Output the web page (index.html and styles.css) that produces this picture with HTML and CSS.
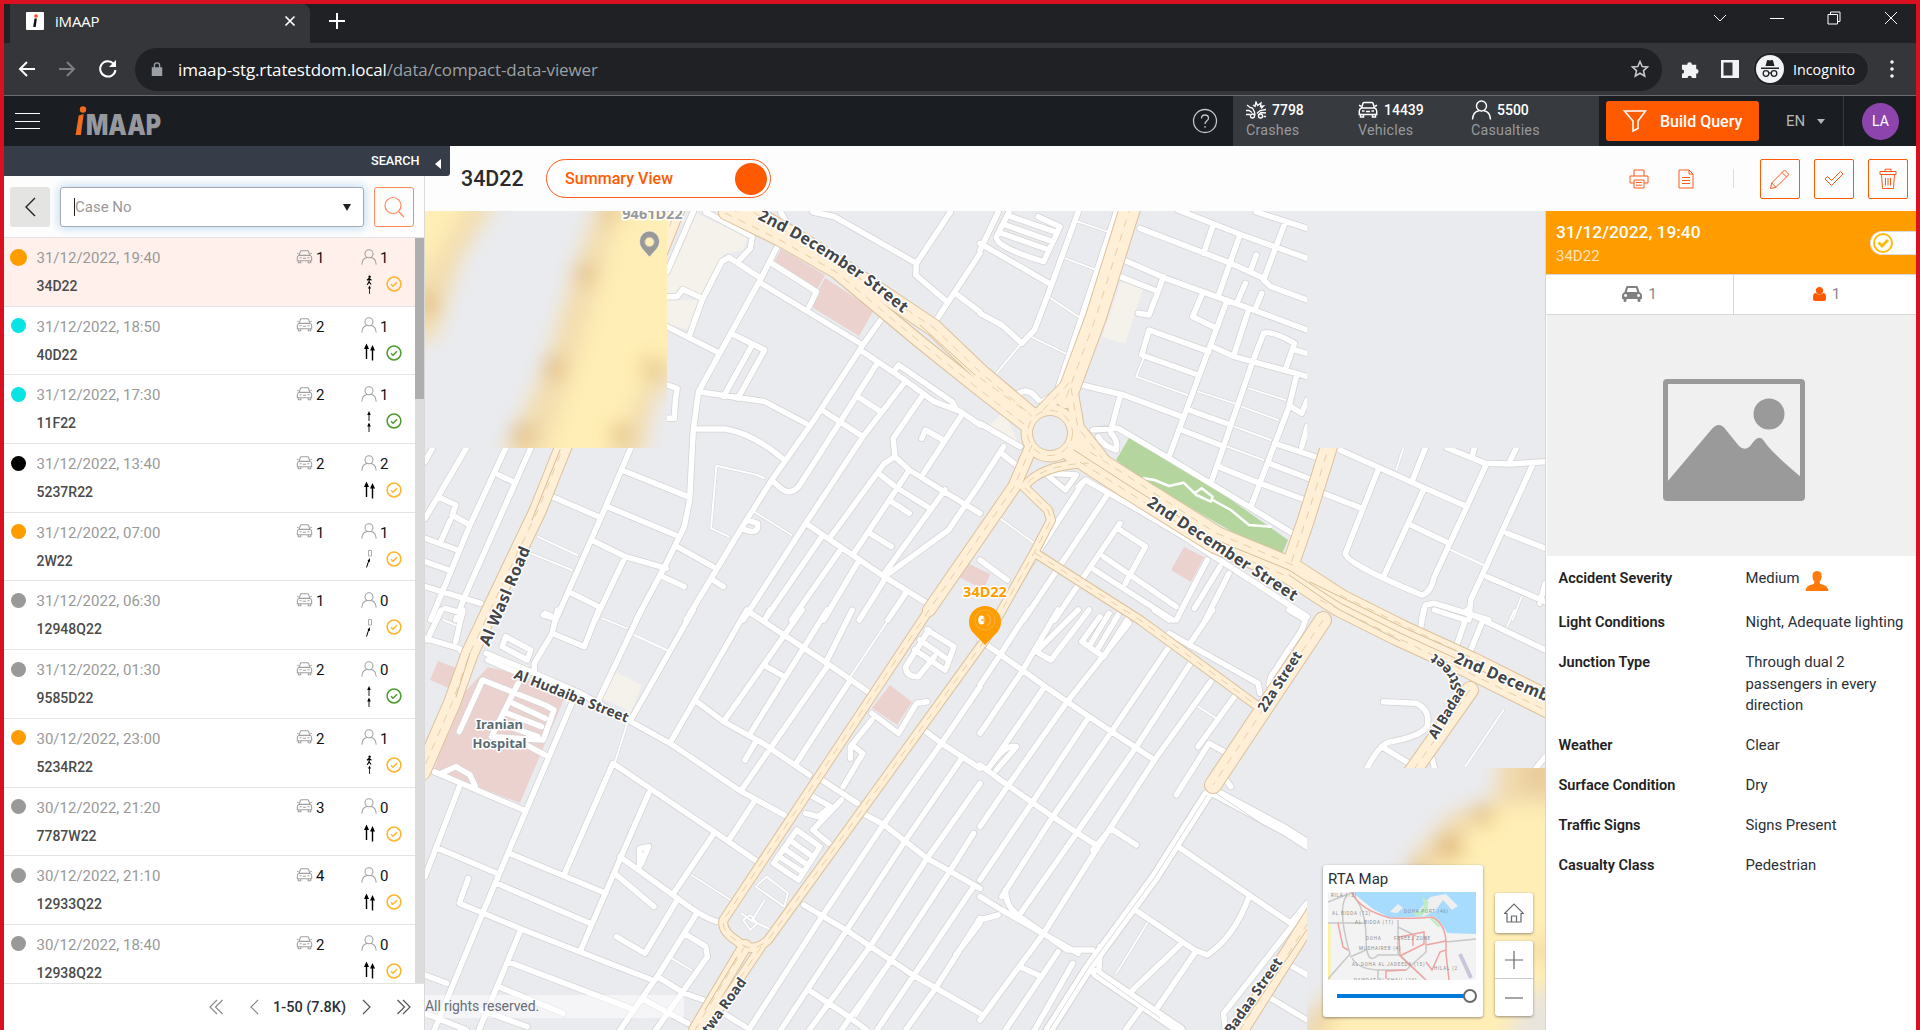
FILE: index.html
```html
<!DOCTYPE html>
<html lang="en">
<head>
<meta charset="utf-8">
<title>iMAAP</title>
<link rel="stylesheet" href="styles.css">
</head>
<body>
<svg class="sprite" width="0" height="0" aria-hidden="true">
  <symbol id="car" viewBox="0 0 20 17"><path d="M3.500 6.500 5 1.800Q5.300 1 6.200 1h7.600q.9 0 1.200.8l1.500 4.700M1 3.800l2 .9M19 3.800l-2 .9M3.300 6.500h13.400q2 .8 2 3V13H1.300V9.500q0-2.200 2-3zM2.500 13v2.500h3V13M14.500 13v2.500h3V13M4 9.500h2.500M13.500 9.500H16M8 10h4"/></symbol>
  <symbol id="person" viewBox="0 0 20 20"><circle cx="10" cy="6" r="5"/><path d="M1 19.500q.5-8 6.500-8.800M19 19.500q-.5-8-6.500-8.800"/></symbol>
  <symbol id="check" viewBox="0 0 16 16"><circle cx="8" cy="8" r="6.900" stroke-width="1.500"/><path d="m5 8.200 2 2 4-3.900" stroke-width="1.500"/></symbol>
  <symbol id="up2" viewBox="0 0 16 22"><path d="M5.500 4v13M11.500 6v12.500" stroke-width="1.400"/><path d="M5.500 1.500 3 7h5zM11.500 3 9 8.500h5z" fill="#000" stroke="none"/></symbol>
  <symbol id="line2" viewBox="0 0 16 22"><path d="M8 2v8M8 13v8" stroke-width=".9"/><path d="M8 0 6.200 4h3.600zM8 11.500 6.200 15.500h3.600z" fill="#000" stroke="none"/></symbol>
  <symbol id="walk" viewBox="0 0 16 22"><path d="m8.300 5-.3 3-1.800 2.800m2.100-2.800 1.700 2.500M8 4.500 6 6.200M8 4.500l2.500 1.700" stroke-width="1.200"/><circle cx="8.600" cy="2.800" r="1.200" fill="#000" stroke="none"/><path d="M8.500 14v6" stroke-width=".8"/><path d="m8.500 11.500-1.500 3h3z" fill="#000" stroke="none"/></symbol>
  <symbol id="object" viewBox="0 0 16 22"><path d="M7.500 2.500h3v5.500h-3z" stroke="#999" stroke-width=".8"/><path d="m8 12-2.500 7.500" stroke-width="1"/><path d="m8.800 10-2.300 3 2.500 1z" fill="#000" stroke="none"/></symbol>
</svg>

<div class="window">
  <div class="tabs">
    <div class="tab">
      <svg class="favicon" width="18" height="18" viewBox="0 0 18 18"><rect width="18" height="18" rx="1" fill="#fff"/><circle cx="10" cy="4" r="1.800" fill="#f04e23"/><path d="M8.500 6.500h2.400L9.700 15H7.200z" fill="#111"/></svg>
      <span class="tab-title">iMAAP</span>
      <svg width="12" height="12" viewBox="0 0 12 12" stroke="#fff" stroke-width="1.700"><path d="m1.500 1.500 9 9m0-9-9 9"/></svg>
    </div>
    <svg class="newtab" width="16" height="16" viewBox="0 0 16 16" stroke="#fff" stroke-width="2"><path d="M8 0v16M0 8h16"/></svg>
    <div class="winctl">
      <svg width="14" height="14" viewBox="0 0 14 14"><path d="m1 4 6 6 6-6"/></svg>
      <svg width="14" height="14" viewBox="0 0 14 14"><path d="M0 7.500h14"/></svg>
      <svg width="14" height="14" viewBox="0 0 14 14"><path d="M1 3.500h9.500V13H1zM3.500 3.500V1H13v9.500h-2.500"/></svg>
      <svg width="14" height="14" viewBox="0 0 14 14"><path d="m1 1 12 12M13 1 1 13"/></svg>
    </div>
  </div>
  <div class="toolbar">
    <div class="nav">
      <svg width="18" height="18" viewBox="0 0 18 18" stroke="#fff"><path d="M17 9H2m7-7L2 9l7 7"/></svg>
      <svg width="18" height="18" viewBox="0 0 18 18" stroke="#7d7e81"><path d="M1 9h15M9 2l7 7-7 7"/></svg>
      <svg width="20" height="20" viewBox="0 0 20 20" stroke="#fff"><path d="M17.500 11A7.700 7.700 0 1 1 15.500 4.600"/><path d="M18 1v7h-7z" fill="#fff" stroke="none"/></svg>
    </div>
    <div class="omnibox">
      <svg width="12" height="14" viewBox="0 0 12 16"><path d="M0 6h12v10H0z" fill="#9aa0a6"/><path d="M3 7V4a3 3 0 0 1 6 0v3" fill="none" stroke="#9aa0a6" stroke-width="1.500"/></svg>
      <span class="url"><b>imaap-stg.rtatestdom.local</b><span>/data/compact-data-viewer</span></span>
      <svg class="star" width="18" height="18" viewBox="0 0 18 18" fill="none" stroke="#c6c7ca" stroke-width="1.600"><path d="m9 1.500 2.200 5 5.300.5-4 3.600 1.200 5.400L9 13.200 4.300 16l1.200-5.400-4-3.600 5.300-.5z"/></svg>
    </div>
    <svg class="puzzle" width="19" height="19" viewBox="0 0 20 20" fill="#f1f3f4"><path d="M1 5h5.500a2.500 2.500 0 1 1 5 0H16v4.500a2.500 2.500 0 1 1 0 5V19h-4.500a2.300 2.300 0 1 0-4.600 0H1v-4.500a2.300 2.300 0 1 0 0-4.600z"/></svg>
    <svg class="side" width="18" height="18" viewBox="0 0 18 18"><path d="M0 0h18v18H0zM2.500 2.500v13h9v-13z" fill="#f1f3f4" fill-rule="evenodd"/></svg>
    <div class="incog">
      <svg width="28" height="28" viewBox="0 0 28 28"><circle cx="14" cy="14" r="14" fill="#f1f3f4"/><path d="m9.500 11 1.500-5.500q.3-.8 1.200-.5l1.800.5 1.800-.5q.9-.3 1.200.5L18.500 11zM5 12.500h18V14H5z" fill="#202124"/><g fill="none" stroke="#202124" stroke-width="1.300"><circle cx="10" cy="18.500" r="2.800"/><circle cx="18" cy="18.500" r="2.800"/><path d="M12.800 18.300q1.200-.8 2.400 0"/></g></svg>
      <span>Incognito</span>
    </div>
    <svg class="dots" width="4" height="18" viewBox="0 0 4 18" fill="#f1f3f4"><circle cx="2" cy="2" r="1.800"/><circle cx="2" cy="9" r="1.800"/><circle cx="2" cy="16" r="1.800"/></svg>
  </div>

  <header class="appbar">
    <div class="burger"><i></i><i></i><i></i></div>
    <svg class="logo" width="88" height="32" viewBox="0 0 88 32"><circle cx="9" cy="4.500" r="3.200" fill="#f26a1b"/><path d="m4.700 10.500 5-1.500-2.800 21H1.600z" fill="#f26a1b"/><text x="12" y="30" textLength="75" lengthAdjust="spacingAndGlyphs">MAAP</text></svg>
    <svg class="help" width="26" height="26" viewBox="0 0 26 26" fill="none" stroke="#c3c4c6" stroke-width="1.300"><circle cx="13" cy="13" r="11.500"/><path d="M9.500 10.500q0-3.500 3.500-3.500t3.500 3.200c0 2.500-3.500 2.600-3.500 5.800M13 18v1.800"/></svg>
    <div class="stats">
      <div class="stat"><svg width="21" height="18" viewBox="0 0 21 18" fill="none" stroke="#fff" stroke-width="1.300"><path d="m1 4 3 2.500 2.500.5 2 4 .5 3.500M20 12l-5-.5-3 3M0 9.500h3l3 2M0 13.500h4M20 8.500l-6 1-3 3M20 15.500h-2.500M7 4l2 1.500L10 1l1.500 3.500L15 2l-.5 3.500 3-.5-2.500 2.500"/><circle cx="6.500" cy="15" r="2"/><circle cx="14.500" cy="15" r="2"/></svg><b>7798</b><span>Crashes</span></div>
      <div class="stat"><svg class="ic" width="20" height="18" stroke="#fff" stroke-width="1.500"><use href="#car"/></svg><b>14439</b><span>Vehicles</span></div>
      <div class="stat"><svg class="ic" width="21" height="20" stroke="#fff" stroke-width="1.400"><use href="#person"/></svg><b>5500</b><span>Casualties</span></div>
    </div>
    <button class="build"><svg width="24" height="24" viewBox="0 0 24 24" fill="none" stroke="#fff" stroke-width="1.600"><path d="M1.500 2h21L15 12v7.500L10 22V12z"/></svg>Build Query</button>
    <div class="lang">EN<i></i></div>
    <div class="user"><span>LA</span></div>
  </header>

  <div class="body">
    <aside class="left">
      <div class="searchbar"><span>SEARCH</span><i></i></div>
      <div class="filter">
        <div class="back"><svg width="12" height="20" viewBox="0 0 12 20" fill="none" stroke="#222" stroke-width="1.400"><path d="M11 1 2 10l9 9"/></svg></div>
        <div class="input"><em></em><span>Case No</span><i></i></div>
        <div class="find"><svg width="22" height="22" viewBox="0 0 22 22" fill="none" stroke="#ff8a57" stroke-width="1.200"><circle cx="10" cy="9.500" r="8"/><path d="m15.500 15.500 5.500 5.500"/></svg></div>
      </div>
      <div class="listwrap">
        <div class="list">
          <div class="row sel"><i class="dot orange"></i><span class="date">31/12/2022, 19:40</span><span class="cars"><svg><use href="#car"/></svg>1</span><span class="ppl"><svg><use href="#person"/></svg>1</span><span class="case">34D22</span><svg class="kind"><use href="#walk"/></svg><svg class="ok"><use href="#check"/></svg></div>
          <div class="row"><i class="dot cyan"></i><span class="date">31/12/2022, 18:50</span><span class="cars"><svg><use href="#car"/></svg>2</span><span class="ppl"><svg><use href="#person"/></svg>1</span><span class="case">40D22</span><svg class="kind"><use href="#up2"/></svg><svg class="ok green"><use href="#check"/></svg></div>
          <div class="row"><i class="dot cyan"></i><span class="date">31/12/2022, 17:30</span><span class="cars"><svg><use href="#car"/></svg>2</span><span class="ppl"><svg><use href="#person"/></svg>1</span><span class="case">11F22</span><svg class="kind"><use href="#line2"/></svg><svg class="ok green"><use href="#check"/></svg></div>
          <div class="row"><i class="dot black"></i><span class="date">31/12/2022, 13:40</span><span class="cars"><svg><use href="#car"/></svg>2</span><span class="ppl"><svg><use href="#person"/></svg>2</span><span class="case">5237R22</span><svg class="kind"><use href="#up2"/></svg><svg class="ok"><use href="#check"/></svg></div>
          <div class="row"><i class="dot orange"></i><span class="date">31/12/2022, 07:00</span><span class="cars"><svg><use href="#car"/></svg>1</span><span class="ppl"><svg><use href="#person"/></svg>1</span><span class="case">2W22</span><svg class="kind"><use href="#object"/></svg><svg class="ok"><use href="#check"/></svg></div>
          <div class="row"><i class="dot"></i><span class="date">31/12/2022, 06:30</span><span class="cars"><svg><use href="#car"/></svg>1</span><span class="ppl"><svg><use href="#person"/></svg>0</span><span class="case">12948Q22</span><svg class="kind"><use href="#object"/></svg><svg class="ok"><use href="#check"/></svg></div>
          <div class="row"><i class="dot"></i><span class="date">31/12/2022, 01:30</span><span class="cars"><svg><use href="#car"/></svg>2</span><span class="ppl"><svg><use href="#person"/></svg>0</span><span class="case">9585D22</span><svg class="kind"><use href="#line2"/></svg><svg class="ok green"><use href="#check"/></svg></div>
          <div class="row"><i class="dot orange"></i><span class="date">30/12/2022, 23:00</span><span class="cars"><svg><use href="#car"/></svg>2</span><span class="ppl"><svg><use href="#person"/></svg>1</span><span class="case">5234R22</span><svg class="kind"><use href="#walk"/></svg><svg class="ok"><use href="#check"/></svg></div>
          <div class="row"><i class="dot"></i><span class="date">30/12/2022, 21:20</span><span class="cars"><svg><use href="#car"/></svg>3</span><span class="ppl"><svg><use href="#person"/></svg>0</span><span class="case">7787W22</span><svg class="kind"><use href="#up2"/></svg><svg class="ok"><use href="#check"/></svg></div>
          <div class="row"><i class="dot"></i><span class="date">30/12/2022, 21:10</span><span class="cars"><svg><use href="#car"/></svg>4</span><span class="ppl"><svg><use href="#person"/></svg>0</span><span class="case">12933Q22</span><svg class="kind"><use href="#up2"/></svg><svg class="ok"><use href="#check"/></svg></div>
          <div class="row"><i class="dot"></i><span class="date">30/12/2022, 18:40</span><span class="cars"><svg><use href="#car"/></svg>2</span><span class="ppl"><svg><use href="#person"/></svg>0</span><span class="case">12938Q22</span><svg class="kind"><use href="#up2"/></svg><svg class="ok"><use href="#check"/></svg></div>
        </div>
        <div class="scroll"><i></i></div>
      </div>
      <div class="pager">
        <svg width="14" height="16" viewBox="0 0 14 16" stroke="#8a8a8a"><path d="M8 1 1 8l7 7M13.500 1l-7 7 7 7"/></svg>
        <svg width="9" height="16" viewBox="0 0 9 16" stroke="#8a8a8a"><path d="M8 1 1 8l7 7"/></svg>
        <span>1-50 (7.8K)</span>
        <svg width="9" height="16" viewBox="0 0 9 16" stroke="#555"><path d="m1 1 7 7-7 7"/></svg>
        <svg width="14" height="16" viewBox="0 0 14 16" stroke="#555"><path d="m.5 1 7 7-7 7M6 1l7 7-7 7"/></svg>
      </div>
    </aside>

    <section class="main">
      <div class="head">
        <h1>34D22</h1>
        <div class="pill"><span>Summary View</span><i></i></div>
        <div class="actions">
          <svg width="20" height="20" viewBox="0 0 20 20"><path d="M5 7V1h10v6M5 14H1V7h18v7h-4M5 11h10v8H5zM7 13.500h6M7 16.200h6"/></svg>
          <svg width="18" height="20" viewBox="0 0 18 20"><path d="M2 1h10l4 4v14H2zM12 1v4h4M5 8.500h8M5 11.500h8M5 14.500h8"/></svg>
          <u></u>
          <span class="btn"><svg width="22" height="22" viewBox="0 0 22 22"><path d="m1.500 20.500 1.200-5.500L15.500 2 20 6.500 7 19.300zM13 4.500 17.500 9M2.700 15 7 19.300"/></svg></span>
          <span class="btn"><svg width="20" height="18" viewBox="0 0 20 18"><path d="m1 9 2.500-2.500 4 4L16.500 1.500 19 4 7.500 15.500z"/></svg></span>
          <span class="btn"><svg width="18" height="22" viewBox="0 0 18 22"><path d="M1 3.500h16v3H1zM6 3.500v-2.300h6v2.300M2.500 6.500 3.500 20.500h11l1-14M6.500 10v7.500M9 10v7.500M11.500 10v7.500"/></svg></span>
        </div>
      </div>
      <div class="content">
        <div class="map">
          <svg class="canvas" width="1120" height="819" viewBox="425 211 1120 819">
            <defs>
              <clipPath id="tl"><rect x="425" y="211" width="242" height="237"/></clipPath>
              <clipPath id="br"><rect x="1307" y="768" width="238" height="262"/></clipPath>
              <filter id="soft" x="-20%" y="-20%" width="140%" height="140%"><feGaussianBlur stdDeviation="10"/></filter>
              <g id="roads">
                <g transform="translate(420 200) scale(.35714 .33333)">
                  <path d="M765 36 692 215M800 36 930 110 925 145 895 180M755 405 790 300 845 185 865 172 955 235M692 290H720L735 268 790 295M1000 140 955 235 870 400 780 575 765 690 755 900 740 980 685 1100 605 1260M955 250 1240 435M1090 320 1110 275 985 190M692 380 830 455M870 400 965 450 890 595M930 435 850 590M790 577 965 605 1080 670M775 687H855Q930 700 1015 775M692 555 720 565 715 600 712 655H692M1300 345 1240 435 1100 665 985 840 900 985 745 1260M1240 455 1350 535 1440 605 1515 635 1568 675M1330 510 1340 495 1490 605 1500 625M1280 490 1180 660 1060 860Q1035 890 1005 860L985 840M1125 630 1240 710M1225 590 1290 635M1355 550 1240 710 1080 970 905 1260M1405 590 1325 715 1330 770 1300 790 1150 1010M1080 970 1300 1130 1420 1210M1330 770 1370 810 1460 870 1568 940M1520 640 1410 820M1405 715 1415 690 1465 720M1370 810 1215 1060M1320 905 1370 940M1345 870 1420 920M1290 825 1325 855M1260 1000 1320 1040M1568 850 1480 990 1300 1130M1470 870 1300 1120M1125 1010 965 1260M1180 1045 1040 1260M1230 1080 1130 1260M1300 1140 1230 1260M1360 1180 1310 1260M1100 36 1160 50 1390 190M1485 36 1390 190 1388 225 1475 305M1568 160 1440 370M1505 285 1568 335M1010 36 1030 75M35 744 14 785M130 744 45 900 14 955M240 744 140 975 30 1260M310 744 125 1190 100 1260M590 744 520 920 380 1260M565 810 750 890M220 825 260 845M370 890 500 950M525 920 715 1005M50 890 100 915 90 945 140 975M85 960 60 1020M14 1015 105 1050M14 1085 80 1110M14 1160 170 1210M480 1020 575 1070 690 1105M575 1070 490 1260M425 1180 500 1220M720 1040 820 1100M680 1130 740 1160M820 1140 850 1160M350 1240 380 1255M70 1225 120 1240M900 985Q950 1010 945 970L915 960"/>
                </g>
                <g transform="translate(980 200) scale(.36352 .33333)">
                  <path d="M270 36 185 290 150 390 115 430M0 130 190 250M50 36 0 150M0 340 60 375 115 430M375 36 210 580 170 605M105 580Q135 560 160 600M440 85 690 190 780 235M395 180 510 235 740 325 900 390M545 30 720 105 900 175M760 36 900 85M640 80 615 160M715 105 655 290M840 65 780 240 800 260 900 300M760 165 745 210M730 250 710 300M775 280 760 320M680 300 520 770M740 325 700 460M610 285 585 350 650 385M385 230 480 270M505 230 465 345 435 340M600 525 445 465 465 390 630 455M640 440 700 470 750 485 870 520 900 530M635 850 750 485 780 400Q800 390 865 430L840 510M865 450 900 460M870 530 850 620 745 920M280 555 395 585 555 650M385 590 360 690M310 690 380 685 520 775 860 1000M575 630 690 675M555 690 660 735M810 730 935 775M795 790 915 840M655 800 770 850 895 900M360 700Q380 720 375 750 340 740 325 710M855 620 885 640 900 600M900 680 885 740M80 36 45 110Q40 140 175 185L220 80 160 50M70 75 200 125M60 100 190 150M85 50 205 95M990 750 1215 860 1340 920M1095 810 1005 1060Q1005 1090 1215 1185 1240 1180 1250 1130L1390 800M1285 744 1390 790 1460 792 1555 785M1225 744 1190 840M1220 870 1110 1130M945 880 1050 925M1185 975 1290 1030M1520 795 1350 1200 1345 1260M1450 1000 1555 1045M1395 1130 1555 1205M1475 744 1455 790M1360 744 1355 765M1215 1260 1225 1215 1250 1210 1400 1260M1555 1150 1540 1210M285 845 45 1250M350 885 120 1260M385 970 205 1260M385 990 455 1040 400 1150M340 1070 540 1220M315 1110 530 1260M270 860 290 840 420 920 560 1010 900 1250M625 1080 540 1260M660 1100 590 1225M685 1120 620 1260M0 670 110 740M65 740 0 850M65 765 105 800M0 1080 75 1140M185 825 235 870 265 825 195 820M400 880 430 920"/>
                </g>
                <g transform="translate(420 610) scale(.35714 .33333)">
                  <path d="M14 85 110 115 130 150M60 0 20 90M120 0 100 95M185 130 310 185 450 250 590 335 700 400 900 545 1020 615M190 150 300 200M385 0 370 70 320 160V190M345 15 380 25M370 70 460 110 500 0M230 110 240 80 310 120 300 150ZM620 0 500 270M765 0 590 330M915 0 705 390M920 5 1140 160 1260 250M1070 0 850 335M1140 0 925 370M1210 0 1140 150M980 0 965 30M1140 170 900 540M1205 210 1050 465M775 275 850 335 960 400 1090 495M940 395 910 450M970 170 1020 200M425 280 250 720 175 910 40 1260M40 485 290 600M110 530 14 800M50 715 215 790M250 730 520 850M215 820 475 940M405 790 540 460 830 670 945 755M640 550 565 735 450 1020M560 740 715 860Q800 930 835 935M545 790 655 890M615 770 615 715 640 710 620 760M820 675 710 850M935 575 865 690M720 870 630 1030 550 980M775 910 670 1090 560 1260M740 970 800 1010 805 1040 660 1260M135 805 110 880 290 960 650 1110M280 965 165 1260M245 1055 590 1195M220 1130 400 1210M14 1095 75 1120M14 1210 130 1260M665 1100 740 1150 795 1170M620 1165 750 1240M170 1200 300 1250M110 365 175 210 350 285 375 300 345 390 200 380M275 220 200 380M245 310 340 350M260 280 350 325M225 340 330 380M290 400 350 435M60 490 100 470 140 495 155 530M1405 355 1460 400 1568 475M1568 230 1460 400 1300 640 1125 920 920 1260M1520 440 1360 690 1195 960 1010 1260M1568 520 1420 745 1260 1010 1090 1260M1480 790 1320 1050 1180 1260M1550 830 1380 1100 1280 1260M1568 925 1440 1140 1360 1260M1240 610 1300 645 1420 745 1568 835M1075 885 1200 965 1380 1095 1568 1210M1125 510 1225 580M1095 1145 1200 1220 1250 1260M850 1210 910 1250M1550 670 1480 790M1568 940 1500 1035M1420 60 1495 110 1475 170M1400 90 1480 150M1385 120 1470 180M1425 60 1360 170Q1360 200 1395 200L1440 140M1420 275 1390 280 1340 370 1265 310M1265 330 1205 410 1205 445M1215 410 1240 430 1185 530M1100 560 1150 590 1115 620 1080 610M1180 570 1100 660 1145 700M1055 660 1120 710 1060 810 990 760ZM1035 690 1100 740M1018 715 1085 765M1003 738 1070 785"/>
                </g>
                <g transform="translate(980 610) scale(.36352 .33333)">
                  <path d="M0 90 180 230 300 320 480 450M0 465 75 525 200 620 325 710M135 0 55 135 0 225M215 0 115 185 0 370M175 235 20 480M410 40 240 275 75 530 0 650M300 320 145 575 0 810M520 110 365 360 200 620 60 860M585 150 430 410 265 670 105 920M635 215 480 450 325 710 175 970 0 1230M270 0 155 125 195 150 300 0M45 480 100 410Q70 400 20 480M360 655 430 705M360 655 310 720M545 710 740 855 855 940 900 880M740 860Q700 980 625 1035L590 1020 420 895M555 1000 420 1140M590 1030 490 1190M0 860 60 900 180 975 270 1030M70 840Q70 890 110 920L240 1020H310M0 930 50 915M330 1010Q330 1060 325 1090M215 1025 70 1260M110 1070 170 1100M255 1060 150 1260M440 1200 400 1260M860 1070 900 1095M800 1165 900 1230M890 905 670 1210 675 1260M700 260 600 410M540 555 630 400 680 430M670 500 690 530M520 70 765 220 770 250M480 0 520 30M850 0 895 30 885 60 800 200 795 225M640 0 575 105M330 20 280 95 340 140 410 20M355 10 305 100M380 15 325 115M1110 275 1200 280Q1240 300 1230 350 1210 380 1130 395 1100 400 1065 474M1105 410 1180 460M1240 430 1250 474M1220 0 1210 70M1340 0 1345 10 1555 120M1380 40 1350 120M1250 0 1335 30 1310 110M1555 440 1530 474"/>
                </g>
              </g>
              <g id="wides">
                <path d="M1207 795 1155 877 1089 967 1049 1030M1214 792 1285 830 1310 846M1096 973 1180 1030"/>
              </g>
              <g id="alleys">
                <path transform="translate(420 200) scale(.35714 .33333)" d="M965 835 945 825 830 797 815 985 865 1010M935 935 1040 1005M330 1010 440 1065M310 1060 425 1110"/>
                <path transform="translate(980 200) scale(.36352 .33333)" d="M450 475 430 530 570 585M600 575 700 610M740 565 840 600M720 620 820 660M700 680 800 720M680 740 780 780M235 175 320 210M195 295 270 350M140 410 235 460M110 435 45 520M270 65 350 95M1165 744 1145 810M1295 1050 1385 1095M1490 1190 1465 1260M55 955 150 1030"/>
                <path transform="translate(420 610) scale(.35714 .33333)" d="M580 340 545 460M510 25 580 55M600 75 690 120M760 795 870 870M705 1045 760 1080M1330 0 1205 200M970 800 1030 850 1020 890 940 830ZM965 870 930 930M900 910 925 930 985 960M905 930 925 915 945 940 925 960ZM1315 1065 1220 1220M65 30 100 45"/>
                <path transform="translate(980 610) scale(.36352 .33333)" d="M460 940 375 1090M600 290 650 325M1470 0 1450 50M1440 300 1335 470"/>
              </g>
              <g id="main8"><path d="M929 610 723.500 920Q721 931 737 941 752 955 768 940L985 640 1034 553 1051 520 1048 510 1024 487Q1040 465 1089 463M1035 553 1140 620 1256 705M761 947 705 1030"/></g>
              <g id="main12"><path d="M1043 410 1070 382 1078 428 1102 458M1032 445 1014 487 929 610M745 946 695 1030M980 378 1031 415M725 213 780 240 836 272 920 342 980 390 1024 424"/><circle cx="1050" cy="433" r="22.500" fill="none"/></g>
              <g id="main16"><path d="M741 205 812 247 873 287 934 328 980 372 1032 416M566 440 538 510 506 577 470 653 452 703 422 772M1331 440 1306 520 1290 566M1323 620 1213 785M1470 690 1410 775M1316 910 1240 1030M678 205 660 250"/></g>
              <g id="main20"><path d="M1131 205 1096 317 1066 398"/></g>
              <g id="main26"><path d="M1074 450 1125 483 1216 540 1289 570 1340 603 1400 633 1470 665 1560 710"/></g>
            </defs>

            <rect x="425" y="211" width="1120" height="819" fill="#eaebef"/>
            <g fill="#f5f2eb">
              <path d="M693 212 747 237 743 250 723 254 702 297 667 293 667 277zM667 300 700 300 688 330 667 324zM1121 282 1143 289 1125 344 1102 337zM1004 412 1020 447 987 427zM616 672 642 685 631 712 602 698z"/>
            </g>
            <g fill="#ecd2cf">
              <path d="M781 249 825 275 816 291 773 264zM825 278 874 310 859 336 810 306zM965 562 990 574 984 590 959 577zM1184 547 1204 557 1191 582 1171 570zM488 667 513 673 565 697 541 753 520 803 434 770 460 697zM438 661 456 668 449 688 430 680zM890 685 912 702 897 725 872 708z"/>
            </g>
            <g class="casing"><use href="#alleys" class="w3"/><use href="#roads" class="w7"/><use href="#wides" class="w12"/></g>
            <g class="white"><use href="#alleys" class="w2"/><use href="#roads" class="w55"/><use href="#wides" class="w10"/></g>
            <path d="M1207 795 1155 877 1089 967 1049 1030M1214 792 1265 826M1096 973 1160 1018" stroke="#d9d9d9" fill="none"/>
            <path d="M1129 438 1227 497 1288 540 1280 559 1147 483 1116 460z" fill="#b4d69e"/>
            <path transform="translate(980 200) scale(.36352 .33333)" class="trail" d="M450 835 480 840 520 858 560 848 595 885 635 905 640 890 610 865 590 880M640 900 690 930 740 975 800 980"/>
            <g class="mcase"><use href="#main8" class="w10"/><use href="#main12" class="w14"/><use href="#main16" class="w18"/><use href="#main20" class="w22"/><use href="#main26" class="w28"/></g>
            <g class="mfill"><use href="#main8" class="w8"/><use href="#main12" class="w12"/><use href="#main16" class="w16"/><use href="#main20" class="w20"/><use href="#main26" class="w26"/></g>
            <circle cx="1050" cy="433" r="17.500" fill="#eaebef" stroke="#dcc19c"/>
            <g class="lane"><use href="#main8"/><use href="#main12"/><use href="#main16"/><use href="#main20"/></g>
            <path class="median" d="M1074 450 1125 483 1216 540 1289 570 1340 603 1400 633 1470 665 1545 702M1289 575 1340 610 1400 641M1310 582 1400 626 1470 657M560 450 532 520M470 653 456 697M920 325 975 375M737 957 705 1010M1310 925 1245 1020"/>
            <path class="lane" d="M1080 462 1216 547 1289 577M1090 452 1216 533 1300 568M1320 600 1545 710M1340 595 1545 693"/>

            <g clip-path="url(#tl)">
              <rect x="425" y="211" width="242" height="237" fill="#eaebef"/>
              <g filter="url(#soft)">
                <path d="M600 195H690V365L655 400 640 465H500L545 365 572 275zM400 195H500L460 260 435 340H400z" fill="#f3ddaf"/>
                <path d="M625 190H695V340L640 390 605 470H540L572 375 598 290zM400 190H475L440 250 400 300z" fill="#ffeeb5"/>
                <g fill="#dcb26f"><circle cx="585" cy="274" r="9"/><circle cx="554" cy="368" r="10"/><circle cx="522" cy="434" r="10"/><circle cx="651" cy="368" r="9"/><circle cx="620" cy="434" r="9"/><circle cx="427" cy="304" r="10"/><circle cx="612" cy="213" r="8"/></g>
              </g>
            </g>
            <rect x="1307" y="211" width="238" height="237" fill="#eaebef"/>
            <g clip-path="url(#br)">
              <rect x="1307" y="768" width="238" height="262" fill="#eaebef"/>
              <g filter="url(#soft)">
                <path d="M1500 750H1570V1050H1290L1320 1000 1400 950 1410 860 1450 815 1495 800z" fill="#f1d9ab"/>
                <path d="M1490 805H1560V965L1530 1050H1310L1340 1005 1430 960 1435 870z" fill="#ffeeb5"/>
                <g fill="#dcaa63"><circle cx="1484" cy="815" r="9"/><circle cx="1451" cy="848" r="11"/><circle cx="1418" cy="872" r="8"/></g>
                <g fill="#e6c896"><circle cx="1541" cy="775" r="16"/><circle cx="1542" cy="950" r="9"/><circle cx="1320" cy="1022" r="9"/><path d="M1530 990h30v60h-60z" fill="#e9e4dd"/></g>
              </g>
            </g>

            <g class="labels">
              <path id="l1" d="M757 219Q835 257 902 313" fill="none"/><path id="l2" d="M1146 505 1294 602" fill="none"/><path id="l3" d="M1453 662Q1500 683 1580 715" fill="none"/><path id="l6" d="M1461 689Q1460 668 1422 645" fill="none"/>
              <text><textPath href="#l1" textLength="174">2nd December Street</textPath></text>
              <text><textPath href="#l2" textLength="176">2nd December Street</textPath></text>
              <text><textPath href="#l3" textLength="140">2nd December St</textPath></text>
              <text font-size="14"><textPath href="#l6" textLength="46">Street</textPath></text>
              <text transform="translate(489 647) rotate(-67)" textLength="106">Al Wasl Road</text>
              <text font-size="14" transform="translate(513 678) rotate(21.500)" textLength="122">Al Hudaiba Street</text>
              <text font-size="14" transform="translate(1265 713) rotate(-57)" textLength="69">22a Street</text>
              <text font-size="14" transform="translate(1436 740) rotate(-59)" textLength="58">Al Badaa</text>
              <text font-size="14" transform="translate(1283 962) rotate(-55)" text-anchor="end">Al Badaa Street</text>
              <text font-size="14" transform="translate(747 982) rotate(-54)" text-anchor="end">Al Satwa Road</text>
              <g fill="#5b6b72" font-size="13" text-anchor="middle"><text x="499.500" y="729">Iranian</text><text x="499.500" y="748">Hospital</text></g>
              <text x="652.500" y="218.500" text-anchor="middle" class="pin-label grey">9461D22</text>
              <text x="985" y="597" text-anchor="middle" class="pin-label">34D22</text>
            </g>
            <path d="M649.500 257 642 248.500A10 10.500 0 1 1 657 248.500z" fill="#999" stroke="#fff" stroke-width=".5"/><circle cx="649.500" cy="242" r="4.700" fill="#ffeeb5" stroke="#bbb"/>
            <path d="M985 645 973.500 633A16 16 0 1 1 996.500 633z" fill="#ff9d00"/><circle cx="985" cy="620" r="10" fill="none" stroke="#f7b142"/><ellipse cx="981.500" cy="620" rx="3.200" ry="4.500" fill="#fff"/><circle cx="982.500" cy="620" r="1.300" fill="#f7b142"/><path d="M987 614a7 7 0 0 1 0 12M984 617q2 3 0 6" fill="none" stroke="#f5b04a" stroke-width="1.500"/>
          </svg>
          <div class="rights">All rights reserved.</div>
          <div class="basemap">
            <span>RTA Map</span>
            <svg width="148" height="88" viewBox="0 0 148 88">
              <rect width="148" height="88" fill="#f3f3f3"/>
              <path d="M24 0 45 17 62 26 105 24 114 32 119 41 148 42V0z" fill="#a8dcff"/>
              <path d="M88 22 102 5 118 2 130 14 124 18 115 8 107 19 96 24zM62 20l8-8 5 4-6 5z" fill="#efefef"/>
              <path d="M84 20q16 1 10-15l6 4q2 14-12 15zM103 25l10 9-3 1-8-8z" fill="#bfecc5"/>
              <path d="M132 62 143 86" stroke="#c9c6dc" stroke-width="4"/><path d="M1 32v56" stroke="#fbf29a" stroke-width="3"/>
              <g fill="none" stroke="#c8c8c8" stroke-width="1.500"><path d="M22 0Q38 15 38 45T50 63H72M0 31H37M0 10 20 2Q8 14 22 62L0 87M22 65 38 58M24 66Q30 77 50 78H78L98 60V44M70 28V62M70 35 88 44M118 50 148 47M72 63 95 85M50 78V88"/></g>
              <g fill="none" stroke="#f0a3a3" stroke-width="1.500"><path d="M24 0Q30 17 62 26 90 27 104 25 118 32 118 52V62L121 88M10 31 15 55 20 58M118 49 98 53M72 64 71 45 96 40V52L72 64 98 88M58 87V79L78 78M98 70l6 8 8-18 6-2M85 42v12"/></g>
              <g class="tiny"><text x="3" y="5">RILA (13)</text><text x="4" y="23">AL BIDDA (12)</text><text x="76" y="21">DOHA PORT (46)</text><text x="27" y="32">AL BIDDA (11)</text><text x="38" y="48">DOHA</text><text x="66" y="48">FEREEJ ZONE</text><text x="31" y="58">MUSHAIREB (4)</text><text x="24" y="74">AL DOHA AL JADEEDA (15)</text><text x="106" y="78">HILAL (2</text><text x="26" y="90">RAWDAT AL KHAIL (24)</text></g>
            </svg>
            <div class="slider"><i></i></div>
          </div>
          <div class="mapbtn home"><svg width="20" height="20" viewBox="0 0 20 20"><path d="M.5 10.500 10 1l9.500 9.500H17V19H3v-8.500zM7.500 19v-6h5v6"/></svg></div>
          <div class="mapbtn zoom"><span><svg width="18" height="18" viewBox="0 0 18 18"><path d="M9 0v18M0 9h18"/></svg></span><span><svg width="18" height="18" viewBox="0 0 18 18"><path d="M0 9h18"/></svg></span></div>
        </div>

        <aside class="details">
          <div class="dhead"><div><b>31/12/2022, 19:40</b><span>34D22</span></div><div class="toggle"><svg width="22" height="22" viewBox="0 0 22 22" fill="none" stroke="#fdbb0a"><circle cx="11" cy="11" r="9" stroke-width="2"/><path d="m6.500 10.500 3.500 3.500 6-6" stroke-width="3"/></svg></div></div>
          <div class="counts">
            <div><svg width="20" height="16" viewBox="0 0 20 16"><path d="M5.500 0h9q1 0 1.300.8L17.500 6Q20 7 20 9.500V13h-1.500v1.500a1.500 1.500 0 0 1-3 0V13h-11v1.500a1.500 1.500 0 0 1-3 0V13H0V9.500Q0 7 2.500 6L4.200.8Q4.500 0 5.500 0zM6 2 4.800 6h10.400L14 2zM3.500 8a1.500 1.500 0 1 0 .1 0zM16.500 8a1.500 1.500 0 1 0 .1 0z" fill="#808080" fill-rule="evenodd"/></svg>1</div>
            <div><svg width="13" height="14" viewBox="0 0 13 14" fill="#ff5a00"><circle cx="6.500" cy="3.600" r="3.600"/><path d="M0 12V9.500Q0 6 3 6q3.500 3 7 0 3 0 3 3.500V12q0 2-2 2H2q-2 0-2-2z"/></svg>1</div>
          </div>
          <div class="photo"><svg width="142" height="122" viewBox="0 0 142 122"><rect x="2.500" y="2.500" width="137" height="117" rx="1.500" fill="none" stroke="#9a9a9a" stroke-width="5"/><circle cx="106" cy="35" r="15.500" fill="#9a9a9a"/><path d="M4 103 48 51Q56 41 63 51L76 67Q82 73 88 66 96 54 101 62 108 73 138 98V120H4z" fill="#9a9a9a"/></svg></div>
          <dl>
            <div class="d1"><dt>Accident Severity</dt><dd>Medium <svg width="24" height="20" viewBox="0 0 24 20"><path d="M12 0q5 0 4.500 6-.5 4-2 5 0 2 2.500 2.500 6 1 6.500 6.500H.5q.5-5.500 6.500-6.500Q9.500 13 9.500 11q-1.500-1-2-5Q7 0 12 0z" fill="#ff7a0a"/></svg></dd></div>
            <div><dt>Light Conditions</dt><dd>Night, Adequate lighting</dd></div>
            <div><dt>Junction Type</dt><dd>Through dual 2 passengers in every direction</dd></div>
            <div><dt>Weather</dt><dd>Clear</dd></div>
            <div><dt>Surface Condition</dt><dd>Dry</dd></div>
            <div><dt>Traffic Signs</dt><dd>Signs Present</dd></div>
            <div><dt>Casualty Class</dt><dd>Pedestrian</dd></div>
          </dl>
        </aside>
      </div>
    </section>
  </div>
</div>
</body>
</html>
```
FILE: styles.css
```css
* { box-sizing: border-box; }
html, body { margin: 0; height: 100%; overflow: hidden; }
body { font-family: Roboto, "Liberation Sans", sans-serif; color: #2b2f36; background: #fff; }
svg { display: block; flex: none; }
.sprite { position: absolute; }
.window { width: 1920px; height: 1030px; border: 4px solid #d9101f; border-bottom: 0; display: flex; flex-direction: column; overflow: hidden; }

/* browser chrome */
.tabs { height: 39px; flex: none; background: #202124; display: flex; align-items: flex-start; font-family: "Open Sans", sans-serif; color: #fff; }
.tab { margin-left: 6px; width: 300px; height: 39px; background: #35363a; border-radius: 0 8px 0 0; display: flex; align-items: center; padding: 0 14px 5px 16px; }
.tab-title { margin-left: 11px; font-size: 15px; flex: 1; letter-spacing: -.2px; }
.newtab { margin: 9px 0 0 19px; }
.winctl { margin: 7px 18px 0 auto; display: flex; gap: 43px; }
.winctl svg { fill: none; stroke: #fff; stroke-width: 1; }
.toolbar { height: 53px; flex: none; background: #35363a; border-bottom: 1px solid #6a6b6e; display: flex; align-items: center; font-family: "Open Sans", sans-serif; }
.nav { width: 131px; display: flex; gap: 22px; padding-left: 14px; align-items: center; }
.nav svg { fill: none; stroke-width: 2; }
.omnibox { width: 1527px; height: 43px; border-radius: 22px; background: #202124; display: flex; align-items: center; padding: 0 13px 0 16px; }
.url { flex: 1; margin-left: 15px; font-size: 17px; color: #9aa0a6; white-space: nowrap; letter-spacing: -.13px; }
.url b { font-weight: 400; color: #fff; }
.puzzle { margin-left: 19px; }
.side { margin-left: 21px; }
.incog { margin-left: 14px; width: 116px; height: 34px; border-radius: 17px; background: #202124; border: 1px solid #3e3f43; display: flex; align-items: center; gap: 9px; padding-left: 2px; color: #fff; font-size: 14.300px; }
.dots { margin-left: 21px; }

/* application bar */
.appbar { height: 50px; flex: none; background: #1a1d22; display: flex; align-items: center; color: #fff; }
.burger { width: 25px; margin-left: 11px; display: flex; flex-direction: column; gap: 6.500px; }
.burger i { height: 1px; background: #fff; }
.logo { margin-left: 34px; overflow: visible; }
.logo text { font: 900 28px Inter, sans-serif; fill: #97989d; }
.help { margin-left: 1030px; }
.stats { margin-left: 15px; width: 366px; height: 50px; background: #373a3f; display: flex; padding: 4px 0 0 13px; }
.stat { display: grid; grid-template: 20px 18px / 21px 92px; column-gap: 5px; font-size: 14.500px; align-items: center; }
.stat:nth-child(1) { width: 112px; }
.stat:nth-child(2) { width: 113px; }
.stat b { font-size: 14px; font-weight: 500; }
.stat span { grid-column: 1 / 3; color: #97999d; font-size: 14.300px; letter-spacing: .2px; padding-top: 2px; }
.ic { fill: none; }
.build { margin-left: 7px; width: 153px; height: 40px; border: 0; border-radius: 3px; background: #ff5a00; color: #fff; font: 500 16px Roboto, sans-serif; display: flex; align-items: center; gap: 13px; padding: 0 0 0 17px; white-space: nowrap; }
.lang { margin-left: 27px; width: 57px; font-size: 15px; color: #b5b6b9; display: flex; align-items: center; gap: 12px; }
.lang i { border: 4.500px solid transparent; border-top: 5px solid #b5b6b9; border-bottom: 0; }
.user { border-left: 1px solid #35383d; height: 50px; flex: 1; display: flex; align-items: center; padding-left: 18px; }
.user span { width: 37px; height: 37px; border-radius: 50%; background: #8e44ad; display: flex; align-items: center; justify-content: center; font-size: 14px; }

.body { flex: 1; display: flex; min-height: 0; }

/* case list */
.left { width: 421px; flex: none; border-right: 1px solid #d9d9d9; display: flex; flex-direction: column; position: relative; z-index: 1; }
.searchbar { width: 446px; height: 30px; flex: none; background: #363c48; border-radius: 0 0 3px 0; color: #fff; font-size: 12.700px; display: flex; align-items: center; padding-left: 367px; font-weight: 500; }
.searchbar span { width: 64px; padding-bottom: 1px; }
.searchbar i { margin-top: 6px; border: 5px solid transparent; border-right: 6px solid #fff; border-left: 0; }
.filter { height: 62px; flex: none; display: flex; padding: 11px 0 0 6px; border-bottom: 1px solid #e3e3e3; background: #fdfdfd; }
.back, .find, .input { height: 40px; border-radius: 3px; display: flex; align-items: center; }
.back { width: 40px; background: #e4e4e2; justify-content: center; }
.input { width: 304px; margin-left: 10px; border: 1px solid #a8aab0; background: #fff; box-shadow: 0 0 10px 1px #b7d9f2; padding: 0 13px; color: #999; font-size: 15px; }
.input em { width: 1px; height: 18px; background: #222; }
.input span { flex: 1; }
.input i { border: 4.500px solid transparent; border-top: 7px solid #222; border-bottom: 0; margin-right: -1px; }
.find { width: 40px; margin-left: 10px; border: 1px solid #ff8a57; justify-content: center; }
.listwrap { height: 745px; flex: none; display: flex; }
.list { width: 411px; overflow: hidden; }
.scroll { width: 9px; background: #dcdcdc; }
.scroll i { display: block; height: 161px; background: #aeaeae; }
.row { height: 68.700px; border-bottom: 1px solid #e4e4e4; display: grid; grid-template: 28px 28px / 26.500px 260.500px 68px 34px; padding: 6px 0 0 6px; align-items: center; font-size: 15px; color: #111; }
.sel { background: #fff0eb; }
.dot { width: 15px; height: 15px; border-radius: 50%; background: #999; margin: 0 0 2px 1px; }
.sel .dot { width: 17px; height: 17px; margin-left: 0; }
.orange { background: #ff9d00; }
.cyan { background: #08e3e3; }
.black { background: #000; }
.date { color: #999; }
.cars, .ppl { display: flex; align-items: center; gap: 3px; }
.cars svg, .ppl svg { width: 16px; height: 16px; fill: none; stroke: #a0a0a0; stroke-width: 1.300; margin-top: -3px; }
.cars svg { width: 17px; height: 14px; margin-left: -1px; }
.ppl { margin-left: -4px; font-size: 15px; }
.case { grid-column: 2 / 4; font-size: 14px; font-weight: 500; color: #4a4a4a; }
.kind { width: 16px; height: 22px; grid-column: 4; grid-row: 2; margin: -3px 0 0 -4px; stroke: #000; fill: none; }
.ok { width: 16px; height: 16px; grid-column: 4; grid-row: 2; margin: -4px 0 0 20.500px; fill: none; stroke: #fdb52a; }
.green { stroke: #4f9a2f; }
.pager { height: 47px; display: flex; align-items: center; border-top: 1px solid #e3e3e3; padding-left: 205px; font-size: 14.500px; font-weight: 500; }
.pager svg { fill: none; stroke-width: 1.200; }
.pager svg:nth-of-type(2) { margin-left: 27px; }
.pager span { margin: 0 15px 0 14px; width: 74px; white-space: nowrap; }
.pager svg:nth-of-type(4) { margin-left: 26px; }

/* main area */
.main { flex: 1; display: flex; flex-direction: column; min-width: 0; }
.head { height: 65px; flex: none; display: flex; align-items: center; background: #fdfdfd; padding-left: 36px; }
h1 { margin: 0; font-size: 21.400px; font-weight: 500; width: 85px; color: #2b2b2b; }
.pill { width: 225px; height: 39px; border: 1px solid #ff5a1a; border-radius: 20px; display: flex; align-items: center; justify-content: space-between; padding: 0 3px 0 18px; color: #ff5a00; font-weight: 500; background: #fff; }
.pill span { font-size: 16px; letter-spacing: .05px; }
.pill i { width: 32px; height: 32px; border-radius: 50%; background: #ff5a00; }
.actions { margin: 0 8px 0 auto; display: flex; align-items: center; }
.actions svg { fill: none; stroke: #ff5a1a; stroke-width: 1; }
.actions > svg + svg { margin-left: 28px; }
.actions u { width: 1px; height: 19px; background: #ddd; margin: 0 26px 0 38px; }
.btn { width: 40px; height: 40px; border: 1px solid #ff5a00; border-radius: 2px; display: flex; align-items: center; justify-content: center; }
.btn + .btn { margin-left: 14px; }
.content { flex: 1; display: flex; min-height: 0; }
.map { width: 1120px; position: relative; overflow: hidden; flex: none; }
.canvas path, .canvas circle { vector-effect: non-scaling-stroke; }
.casing, .white, .mcase, .mfill, .lane, .median, .trail { fill: none; stroke-linecap: round; stroke-linejoin: round; }
.casing { stroke: #d3d3d4; }
.white { stroke: #fff; }
.trail { stroke: #fff; stroke-width: 2.500; }
.mcase { stroke: #dcc19c; }
.mfill { stroke: #feefd6; }
.lane { stroke: #e9cfa8; stroke-dasharray: 8 7; stroke-width: 1; stroke-linecap: butt; }
.median { stroke: #d9bd97; stroke-width: 1; }
.w2 { stroke-width: 2; } .w3 { stroke-width: 3; } .w55 { stroke-width: 5.500; } .w7 { stroke-width: 7; }
.w8 { stroke-width: 8; } .w10 { stroke-width: 10; } .w12 { stroke-width: 12; } .w14 { stroke-width: 14; }
.w16 { stroke-width: 16; } .w18 { stroke-width: 18; } .w20 { stroke-width: 20; } .w22 { stroke-width: 22; }
.w26 { stroke-width: 26; } .w28 { stroke-width: 28; }
.labels { font-family: "Noto Sans", sans-serif; font-weight: 700; font-size: 16px; fill: #434548; stroke: #fff; stroke-width: 3px; stroke-linejoin: round; paint-order: stroke; }
.labels path { stroke: none; }
.pin-label { fill: #ff9d00; font-size: 14.500px; }
.grey { fill: #999; }
.rights { position: absolute; left: 0; top: 784px; width: 259px; height: 23px; background: rgba(255, 255, 255, .5); font-size: 14px; line-height: 23px; letter-spacing: -.08px; color: #6a6f77; }
.basemap, .mapbtn { position: absolute; background: #fff; border-radius: 3px; box-shadow: 0 1px 3px rgba(0, 0, 0, .4); }
.basemap { left: 898px; top: 654px; width: 160px; height: 152px; padding: 5px 5px 0 5px; font-size: 15px; line-height: 19px; }
.basemap svg { margin-top: 3px; }
.tiny { font: 4.500px Roboto, sans-serif; letter-spacing: .8px; fill: #8d8d8d; }
.slider { margin: 14px 8px 0 9px; height: 4px; background: #0079d8; display: flex; align-items: center; justify-content: flex-end; }
.slider i { width: 14px; height: 14px; flex: none; border: 2px solid #6a6a6a; border-radius: 50%; background: #fff; margin-right: -7px; }
.mapbtn { left: 1070px; width: 38px; display: flex; align-items: center; justify-content: center; }
.mapbtn svg { fill: none; stroke: #666a6e; stroke-width: 1.200; }
.home { top: 682px; height: 40px; }
.zoom { top: 730px; height: 75px; flex-direction: column; }
.zoom span { flex: 1; width: 100%; display: flex; align-items: center; justify-content: center; }
.zoom span + span { border-top: 1px solid #ccc; }

/* case details */
.details { flex: 1; border-left: 1px solid #d5d5d5; display: flex; flex-direction: column; background: #fff; }
.dhead { height: 63px; background: #ff9d00; color: #fff; display: flex; justify-content: space-between; align-items: center; padding-left: 10px; }
.dhead b { display: block; font-size: 17.350px; font-weight: 500; line-height: 26px; }
.dhead span { display: block; font-size: 15px; line-height: 22px; color: #ffe4b8; }
.toggle { width: 46px; height: 24px; border-radius: 12px 0 0 12px; background: #fff; display: flex; align-items: center; padding-left: 1px; border: 1px solid #ddd; border-right: 0; }
.counts { height: 41px; display: flex; border-bottom: 1px solid #d8d8d8; border-top: 1px solid #d8d8d8; color: #8a8a8a; font-size: 15.500px; }
.counts div { width: 187px; display: flex; align-items: center; justify-content: center; gap: 6px; padding-bottom: 2px; }
.counts div + div { border-left: 1px solid #d8d8d8; width: auto; flex: 1; padding-left: 3px; }
.photo { height: 241px; margin-left: 1px; background: #f0f0f0; display: flex; align-items: center; justify-content: center; padding-top: 8px; padding-left: 4px; }
dl { margin: 0; padding: 12px 0 0 12.500px; font-size: 14.850px; line-height: 21.500px; }
dl div { display: flex; margin-bottom: 18.600px; padding-right: 6px; }
dl .d1 { margin-bottom: 21px; }
dt { width: 187px; font-weight: 600; font-size: 14.500px; color: #222; flex: none; }
dd { margin: 0; display: flex; gap: 5px; white-space: normal; }
dd svg { margin-top: 3px; }
```
